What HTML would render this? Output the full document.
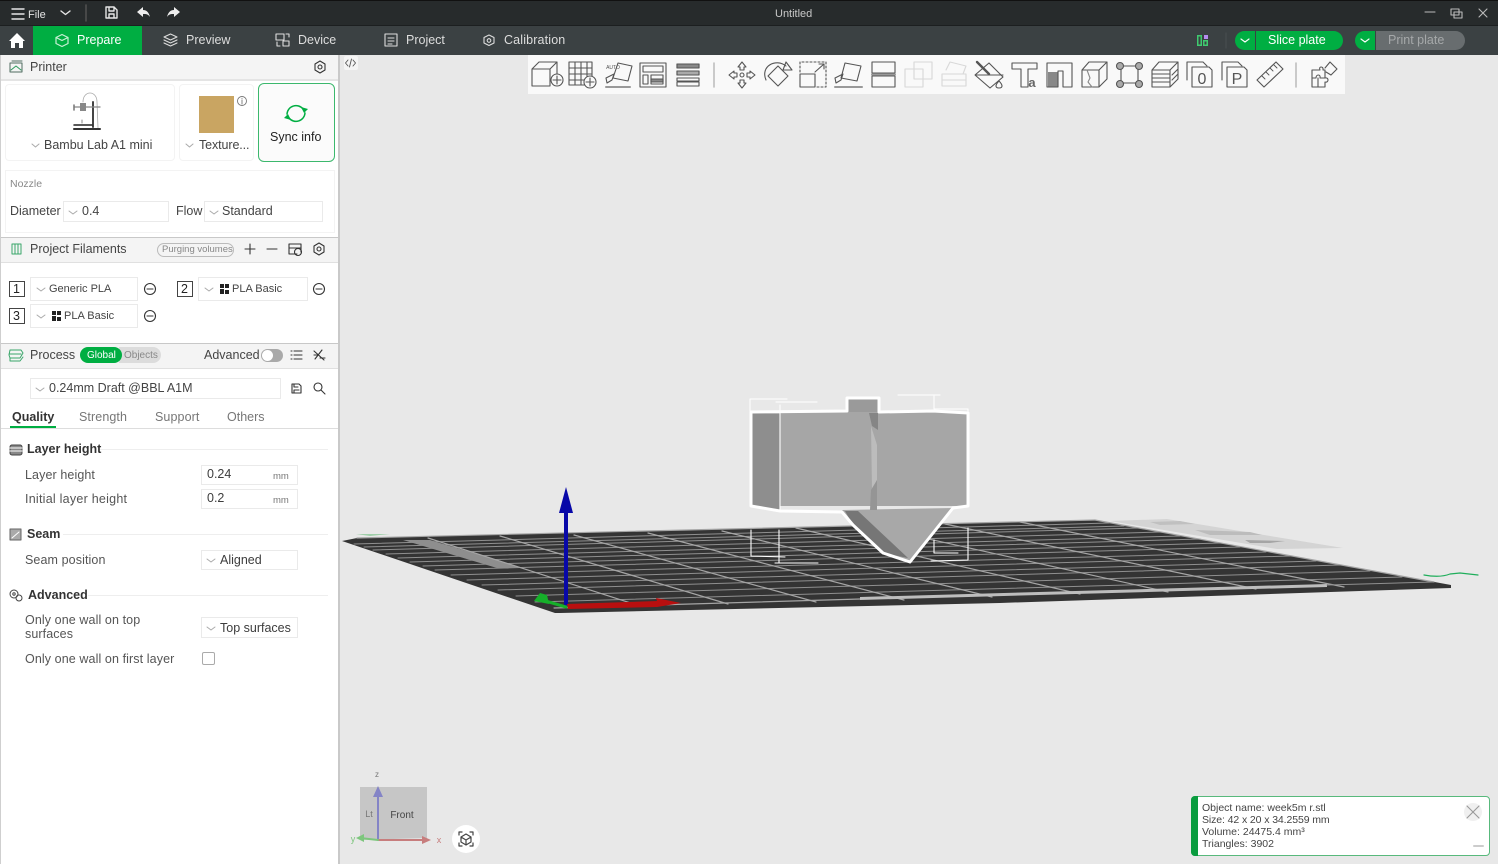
<!DOCTYPE html>
<html><head><meta charset="utf-8"><title>Untitled</title>
<style>
html,body{margin:0;padding:0;width:1498px;height:864px;overflow:hidden;background:#e8e8e8}
body{font-family:"Liberation Sans","Noto Sans CJK SC",sans-serif;position:relative;color:#333}
.a{position:absolute;box-sizing:border-box}
.t{position:absolute;white-space:nowrap;line-height:16px;height:16px;font-size:12.5px;color:#3d3d3d}
.g{color:#555;letter-spacing:.1px}
.b{font-weight:bold;color:#333}
.dd{position:absolute;box-sizing:border-box;border:1px solid #eaeaea;background:#fff}
svg{position:absolute;left:0;top:0}
svg text{font-family:"Liberation Sans",sans-serif}
</style></head><body>
<div class="a" style="left:0;top:0;width:1498px;height:25px;background:#272b2c;border-top:1px solid #111"></div>
<div class="a" style="left:0;top:25px;width:1498px;height:30px;background:#3b4143;border-top:1px solid #1c1f20"></div>
<div class="a" style="left:33px;top:26px;width:109px;height:29px;background:#00ae42"></div>
<div class="a" style="left:0;top:55px;width:340px;height:809px;background:#fff;border-right:2px solid #c9c9c9;border-left:1px solid #cfcfcf"></div>
<div class="a" style="left:1px;top:55px;width:337px;height:26px;background:#f4f4f4;border-bottom:2px solid #e4e4e4"></div>
<div class="a" style="left:1px;top:237px;width:337px;height:26px;background:#f4f4f4;border-top:1px solid #c8c8c8;border-bottom:1px solid #e0e0e0"></div>
<div class="a" style="left:1px;top:343px;width:337px;height:26px;background:#f4f4f4;border-top:1px solid #c8c8c8;border-bottom:1px solid #e0e0e0"></div>
<div class="a" style="left:5px;top:84px;width:170px;height:77px;border:1px solid #f3f3f3;border-radius:4px"></div>
<div class="a" style="left:179px;top:84px;width:75px;height:77px;border:1px solid #f3f3f3;border-radius:4px"></div>
<div class="a" style="left:258px;top:83px;width:77px;height:79px;border:1px solid #3cb86d;border-radius:6px;background:#fbfbfb"></div>
<div class="a" style="left:5px;top:170px;width:330px;height:63px;border:1px solid #f3f3f3"></div>
<div class="a" style="left:199px;top:96px;width:35px;height:37px;background:#c9a562"></div>
<div class="dd" style="left:63px;top:201px;width:106px;height:21px"></div>
<div class="dd" style="left:204px;top:201px;width:119px;height:21px"></div>
<div class="dd" style="left:30px;top:277px;width:108px;height:24px"></div>
<div class="dd" style="left:198px;top:277px;width:110px;height:24px"></div>
<div class="dd" style="left:30px;top:304px;width:108px;height:24px"></div>
<div class="dd" style="left:30px;top:378px;width:251px;height:21px"></div>
<div class="dd" style="left:201px;top:465px;width:97px;height:20px"></div>
<div class="dd" style="left:201px;top:489px;width:97px;height:20px"></div>
<div class="dd" style="left:201px;top:550px;width:97px;height:20px"></div>
<div class="dd" style="left:201px;top:617px;width:97px;height:21px"></div>
<div class="a" style="left:202px;top:652px;width:13px;height:13px;border:1px solid #aaa;border-radius:2px"></div>
<div class="a" style="left:9px;top:281px;width:16px;height:16px;border:1px solid #444"></div>
<div class="a" style="left:177px;top:281px;width:16px;height:16px;border:1px solid #444"></div>
<div class="a" style="left:9px;top:308px;width:16px;height:16px;border:1px solid #444"></div>
<div class="a" style="left:157px;top:243px;width:77px;height:14px;border:1px solid #bbb;border-radius:7px"></div>
<div class="a" style="left:119px;top:347px;width:42px;height:16px;background:#dcdcdc;border-radius:0 8px 8px 0"></div>
<div class="a" style="left:80px;top:347px;width:42px;height:16px;background:#00ae42;border-radius:8px"></div>
<div class="a" style="left:261px;top:349px;width:22px;height:13px;background:#a9a9a9;border-radius:7px"></div>
<div class="a" style="left:262px;top:350px;width:11px;height:11px;background:#fff;border-radius:6px"></div>
<div class="a" style="left:1px;top:428px;width:337px;height:1px;background:#ddd"></div>
<div class="a" style="left:10px;top:426px;width:46px;height:2px;background:#00ae42"></div>
<div class="a" style="left:100px;top:449px;width:228px;height:1px;background:#eee"></div>
<div class="a" style="left:63px;top:534px;width:265px;height:1px;background:#eee"></div>
<div class="a" style="left:88px;top:595px;width:240px;height:1px;background:#eee"></div>
<div class="a" style="left:528px;top:55px;width:817px;height:39px;background:#f9f9f9"></div>
<div class="a" style="left:344px;top:56px;width:14px;height:14px;background:#f5f5f5;border-radius:2px"></div>
<div class="a" style="left:1235px;top:31px;width:20px;height:19px;background:#00ae42;border-radius:10px 0 0 10px"></div>
<div class="a" style="left:1256px;top:31px;width:87px;height:19px;background:#00ae42;border-radius:0 10px 10px 0"></div>
<div class="a" style="left:1355px;top:31px;width:20px;height:19px;background:#00ae42;border-radius:10px 0 0 10px"></div>
<div class="a" style="left:1376px;top:31px;width:89px;height:19px;background:#686d6f;border-radius:0 10px 10px 0"></div>
<div class="a" style="left:1191px;top:796px;width:299px;height:60px;background:#fff;border:1px solid #58b97c;border-radius:4px"></div>
<div class="a" style="left:1191px;top:796px;width:7px;height:60px;background:#0a9c3f;border-radius:4px 0 0 4px"></div>

<svg width="1498" height="864" viewBox="0 0 1498 864" fill="none" stroke-linecap="round" stroke-linejoin="round">
<!-- bed -->
<g stroke="none">
<polygon points="342,541 357,538 1095,520 1451,585 1451,588 1000,603 560,613 555,613" fill="#343434"/>
<polygon points="1110,521 1167,519 1343,548 1277,549" fill="#d4d4d4"/>
<polygon points="1245,540 1285,541 1270,543 1250,543" fill="#a5a5a5"/>
<polygon points="1150,522 1180,521 1195,524 1160,525" fill="#c0c0c0"/>
<polygon points="1195,530 1250,532 1262,535 1210,535" fill="#bcbcbc"/>
<polygon points="403,540 430,540 523,568 497,568" fill="#8e8e8e"/>
<polygon points="356,534 390,534 370,536" fill="#9fcfa9"/>
</g>
<g stroke="#8f8f8f" stroke-width="1">
<path d="M354,544L1109,523M364,547L1124,526M373,550L1138,528M386,554L1160,532M398,558L1180,536M410,562L1200,539M423,566L1220,543M435,570L1240,547M451,575L1266,552M467,580L1290,556M482,585L1316,561M498,590L1340,565M516,596L1370,571M535,602L1402,577"/>
</g>
<g stroke="#a5a5a5" stroke-width="1.2">
<path d="M357,538L1095,520M554,608L860,599"/>
<path d="M428,538L640,606M500,536L728,604M574,535L816,602M648,533L904,600M722,531L992,597M796,528L1080,594M870,526L1168,592M945,524L1256,589M1020,522L1344,587M1095,520L1434,582"/>
</g>
<polygon points="860,597 1327,584 1327,587 860,600" fill="#bdbdbd"/>
<path d="M1327,585L1434,582" stroke="#8f8f8f"/>
<path d="M1424,575Q1440,578 1450,574L1460,573L1478,575" stroke="#1fae5b" stroke-width="1.2"/>
<!-- axes -->
<g stroke="none">
<rect x="564" y="512" width="4" height="95" fill="#0808a8"/>
<polygon points="566,487 559,513 573,513" fill="#0808a8"/>
<polygon points="567,604 657,601 656,598 681,603 657,607 568,609" fill="#b80f0f"/>
</g>
<path d="M566,607L542,600" stroke="#16b02a" stroke-width="3"/>
<polygon points="534,601 540,593 547,595 549,604" fill="#16b02a"/>
<!-- object -->
<g stroke="none">
<polygon points="751,412 968,412 968,506 751,506" fill="#a6a6a6"/>
<polygon points="751,413 780,414 780,511 751,506" fill="#8e8e8e"/>
<polygon points="847,399 879,399 879,412 847,412" fill="#9a9a9a"/>
<polygon points="842,510 953,508 910,562 883,553 853,525" fill="#a8a8a8"/>
<polygon points="845,511 858,511 908,558 883,553 853,525" fill="#767676"/>
<polygon points="869,413 878,413 878,430 872,426" fill="#858585"/>
<polygon points="871,426 877,445 877,480 872,490" fill="#bcbcbc"/>
<polygon points="871,490 877,480 877,510 870,510" fill="#959595"/>
</g>
<path d="M751,412L847,411L847,398L879,398L879,412L933,411L968,413L968,506L953,508L910,562L883,553L853,525L842,512L780,511L751,506Z" stroke="#fff" stroke-width="3"/>
<path d="M750,411V399H787M776,402H817M780,405V511M898,395H940M934,396V409H968V411M751,530V556L785,557M775,563H818M779,530V563M934,540V553H958M968,528V560L931,561" stroke="#fff" stroke-width="1.1"/>
<!-- nav cube -->
<polygon points="360,787 427,787 427,838 360,840" fill="#c6c6c6"/>
<g stroke-width="2">
<path d="M378,840V796" stroke="#8484c6"/><path d="M378,840H425" stroke="#c77d7d"/><path d="M378,840L360,838" stroke="#7dc67d"/>
</g>
<polygon points="378,786 373,797 383,797" fill="#8484c6"/><polygon points="431,840 422,836 422,844" fill="#c77d7d"/><polygon points="356,838 364,834 364,842" fill="#7dc67d"/>
<text x="402" y="818" font-size="10" fill="#444" text-anchor="middle">Front</text>
<text x="369" y="817" font-size="9" fill="#777" text-anchor="middle">Lt</text>
<text x="377" y="777" font-size="8" fill="#777" text-anchor="middle">z</text>
<text x="439" y="843" font-size="9" fill="#c77d7d" text-anchor="middle">x</text>
<text x="353" y="842" font-size="9" fill="#7dc67d" text-anchor="middle">y</text>
<circle cx="466" cy="839" r="14" fill="#fff"/>
<g stroke="#444" stroke-width="1.2"><path d="M459,835V832H462M470,832H473V835M473,843V846H470M462,846H459V843"/><path d="M466,834L471,837V842L466,845L461,842V837ZM461,837L466,840L471,837M466,840V845"/></g>

<!-- top bar -->
<g stroke="#e6e6e6" stroke-width="1.4">
<path d="M12,9H24M12,14H24M12,19H24"/>
<path d="M61,11L65.500,14.500L70,11"/>
<path d="M86,5V21" stroke="#555"/>
<path d="M106,7H114L117,10V18H106ZM109,7V11H114V7M109,18V14H114V18"/>
</g>
<path d="M137,12L143,7V10C147,10 149,13 150,17C148,14 146,14 143,14V17Z" fill="#eee"/>
<path d="M180,12L174,7V10C170,10 168,13 167,17C169,14 171,14 174,14V17Z" fill="#eee"/>
<g stroke="#bbb" stroke-width="1.1"><path d="M1425,12H1435"/><path d="M1451,9H1459V15H1451ZM1454,12H1462V18H1454Z"/><path d="M1479,9L1487,17M1487,9L1479,17"/></g>
<!-- tab icons -->
<path d="M9,41L17,33L25,41H23V48H19V43H15V48H11V41Z" fill="#fff"/>
<g stroke="#c8f0d4" stroke-width="1.2"><path d="M62,34.500L68,37.500V43.500L62,46.500L56,43.500V37.500ZM56,37.500L62,40.500L68,37.500"/></g>
<g stroke="#ddd" stroke-width="1.1">
<path d="M170.500,34L177,37L170.500,40L164,37ZM164,40L170.500,43L177,40M164,43L170.500,46L177,43"/>
<path d="M276,34H284V40H276ZM277,46V42M277,46H280M286,34H289V37M289,46H283V41H289Z"/>
<path d="M385,34H397V46H385ZM388,38H394M388,41H394M388,44H392"/>
<path d="M489,35L494,37.500V43L489,45.500L484,43V37.500Z"/><circle cx="489" cy="40.500" r="1.800"/>
</g>
<g stroke="#fff" stroke-width="1.1">
<path d="M1241,39L1245,42L1249,39M1361,39L1365,42L1369,39"/>
</g>
<g fill="#3fca6f" stroke="none"><rect x="1197" y="35" width="5" height="11"/><rect x="1203" y="40" width="5" height="6"/></g>
<rect x="1198.500" y="36.500" width="2" height="8" fill="#3b4143"/><rect x="1204.500" y="41.500" width="2" height="3" fill="#3b4143"/>
<rect x="1204" y="35" width="4" height="4" fill="#b58cf0"/>
<path d="M1226,33V48" stroke="#4a5052"/>
<!-- left panel icons -->
<g stroke="#4f6b60" stroke-width="1">
<path d="M10,63H22V72H10ZM12,61H22"/><path d="M11,70L16,66L21,70" stroke="#2d9a5c"/>
<path d="M12,244H21V254H12ZM15,244V254M18,244V254" stroke="#3aa66a"/>
<path d="M10,350H21L23,353L20,358H10L9,355ZM9,354H21M10,358V361H20L23,357" stroke="#3aa66a"/>
</g>
<g stroke="#333" stroke-width="1.1">
<circle cx="320" cy="67" r="2"/><path d="M320,61L325,64V70L320,73L315,70V64Z"/>
<circle cx="319" cy="249" r="2"/><path d="M319,243L324,246V252L319,255L314,252V246Z"/>
<path d="M245,249H255M250,244V254M267,249H277" />
<path d="M289,244H301V252M289,244V254H297M289,248H301"/><circle cx="298" cy="252" r="3.500"/>
<circle cx="150" cy="289" r="5.500"/><path d="M147,289H153"/>
<circle cx="319" cy="289" r="5.500"/><path d="M316,289H322"/>
<circle cx="150" cy="316" r="5.500"/><path d="M147,316H153"/>
<path d="M294,351H302M294,355H302M294,359H302M291,351H292M291,355H292M291,359H292"/>
<path d="M314,351L324,360M322,350L315,359M314,355H318M320,358H325"/>
<path d="M292,384H299L301,386V393H292ZM294,384V387H298M294,393V390H299"/>
<circle cx="318" cy="387" r="4"/><path d="M321,390L325,394"/>
</g>
<g stroke="#aaa" stroke-width="1">
<path d="M32,144L35.500,147L39,144M186,144L189.500,147L193,144M69,211L73,214L77,211M210,211L214,214L218,211M37,288L41,291L45,288M205,288L209,291L213,288M37,315L41,318L45,315M36,388L40,391L44,388M207,559L211,562L215,559M207,627L211,630L215,627"/>
</g>
<g fill="#222" stroke="none"><path d="M220,284H224V288H220ZM225,284H229V288H225ZM220,289H224V294H220ZM225,290H229V294H225Z"/><path d="M52,311H56V315H52ZM57,311H61V315H57ZM52,316H56V321H52ZM57,317H61V321H57Z"/></g>
<circle cx="242" cy="101" r="4.500" stroke="#777" stroke-width="0.9"/><path d="M242,100V104M242,98.500V98.700" stroke="#777" stroke-width="0.9"/>
<!-- sync -->
<g stroke="#00ae42" stroke-width="1.5"><path d="M287,114A9,9 0 0 1 303,109M305,113A9,9 0 0 1 289,118"/></g>
<polygon points="301,107 308,109 304,113" fill="#00ae42"/><polygon points="291,120 284,118 288,114" fill="#00ae42"/>
<!-- printer -->
<g stroke="#666"><path d="M83,102C83,90 97,90 97,102L98,128" stroke="#aaa" stroke-width="0.8"/><path d="M93,102V127" stroke="#444" stroke-width="2"/><path d="M74,107H100" stroke="#888" stroke-width="1.3"/><path d="M74,105V110" stroke="#777" stroke-width="1.5"/><path d="M74,125H92" stroke="#222" stroke-width="1.5"/><path d="M74,129H100" stroke="#333" stroke-width="2"/><path d="M82,120V123" stroke="#888"/></g>
<rect x="80" y="103" width="6" height="8" fill="#888"/>
<!-- section icons -->
<g stroke="#444" stroke-width="1">
<rect x="10" y="445" width="12" height="10" rx="2" fill="#888"/><path d="M10,448H22M10,451H22" stroke="#fff"/>
<rect x="10" y="529" width="11" height="11" fill="#aaa" stroke="#666"/><path d="M12,538L19,532" stroke="#fff"/>
<circle cx="14" cy="594" r="4"/><circle cx="19" cy="598" r="3"/><circle cx="14" cy="594" r="1.200"/>
</g>
<!-- collapse -->
<path d="M348,60L345.500,63L348,66M353,60L355.500,63L353,66M351.500,59L349.500,67" stroke="#555" stroke-width="0.9"/>
<!-- notification close -->
<circle cx="1473" cy="812" r="9" fill="#f0f0f0"/><path d="M1467,806L1479,818M1479,806L1467,818" stroke="#999" stroke-width="1.1"/>
<path d="M1474,846H1483" stroke="#ccc" stroke-width="2"/>

<!-- toolbar icons -->
<g stroke="#555" stroke-width="1.1">
<path d="M532,69H550V86H532ZM532,69L539,62H557V76M550,69L557,62"/><circle cx="557" cy="80" r="6" fill="#f9f9f9"/><path d="M553,80H561M557,76V84"/>
<path d="M569,62H592V85H569ZM569,68H592M569,74H592M569,80H592M575,62V85M581,62V85M587,62V85"/><circle cx="590" cy="82" r="6" fill="#f9f9f9"/><path d="M586,82H594M590,78V86"/>
<path d="M618,63L632,66L628,81L613,78Z"/><path d="M606,87H630" stroke-width="2" stroke="#999"/><path d="M614,74L606,78L607,83L612,80Z"/>
<path d="M640,63H666V87H640ZM643,66H663V72H643ZM643,75H648V84H643ZM651,75H663V84H651Z"/><rect x="651" y="79" width="12" height="3" fill="#888"/>
<path d="M677,64H699V68H677ZM677,71H699V75H677ZM677,78H699V81H677ZM677,82H699V86H677Z"/><rect x="677" y="64" width="22" height="4" fill="#888"/><rect x="677" y="71" width="22" height="4" fill="#aaa"/>
<path d="M714,63V87" stroke="#bbb" stroke-width="1.5"/>
<circle cx="742" cy="75" r="2"/><path d="M738,67L742,62L746,67H744V70H740V67ZM738,83L742,88L746,83H744V80H740V83ZM734,71L729,75L734,79V77H737V73H734ZM750,71L755,75L750,79V77H747V73H750Z"/>
<path d="M778,66L788,76L778,86L768,76Z"/><path d="M766,80C760,66 776,58 786,66"/><path d="M786,62L792,70L783,70Z"/>
<path d="M800,74H815V87H800Z"/><path d="M800,72V62H826V87H817" stroke-dasharray="2 2"/><path d="M815,72L824,64M819,64H824V69"/>
<path d="M845,63L861,66L857,81L841,78Z"/><path d="M835,87H862" stroke-width="2" stroke="#999"/><path d="M843,74L835,78L836,83L841,80Z"/>
<path d="M872,62H895V73H872ZM872,76H895V87H872Z"/><path d="M872,74.500H895" stroke="#999" stroke-width="2"/>
<g stroke="#d8d8d8"><path d="M914,62H932V79H914ZM905,69H923V87H905Z"/><path d="M942,74H966V86H942ZM946,70L950,62L966,66L963,74"/><path d="M942,80H966"/></g>
<path d="M989,63L1003,77L990,88L975,75ZM975,75H1003"/><path d="M977,62L989,74" stroke-width="2.400"/><path d="M999,81C1003,85 1003,88 999,88C995,88 995,85 999,81Z"/>
<path d="M1012,63H1037V69H1028V87H1021V69H1012Z"/>
<rect x="1048" y="72" width="10" height="15" fill="#888" stroke="none"/>
<path d="M1047,63H1072V87H1063V71H1058V87H1047Z"/>
<path d="M1082,70H1099V87H1082ZM1082,70L1089,62H1107V79L1099,87M1099,70L1107,62"/><path d="M1087,70L1090,78L1088,82L1092,87" stroke="#888"/>
<path d="M1121,66H1138V83H1121Z"/><circle cx="1120" cy="66" r="3.500" fill="#aaa"/><circle cx="1139" cy="66" r="3.500" fill="#aaa"/><circle cx="1120" cy="84" r="3.500" fill="#aaa"/><circle cx="1139" cy="84" r="3.500" fill="#aaa"/>
<path d="M1152,70H1170V87H1152ZM1152,70L1159,62H1178V79L1170,87M1170,70L1178,62M1152,74H1170M1152,78H1170M1152,82H1170M1172,75L1178,69M1172,80L1178,74M1172,85L1178,79"/>
<path d="M1187,80V62H1203L1207,66M1192,87V67H1209L1212,70V87Z"/>
<path d="M1222,80V62H1238L1242,66M1227,87V67H1244L1247,70V87Z"/>
<path d="M1257,80L1276,62L1283,69L1264,87Z"/><path d="M1262,76L1265,79M1266,72L1269,75M1270,68L1273,71M1274,65L1277,68" stroke-width="0.9"/>
<path d="M1296,63V87" stroke="#bbb" stroke-width="1.5"/>
<path d="M1312,70H1320C1318,66 1324,66 1323,70H1325V78C1329,77 1329,83 1325,82V87H1312ZM1312,78H1316C1316,74 1321,74 1320,78H1325M1318,78V87"/><path d="M1325,68L1330,62L1337,69L1331,75L1326,72"/>
</g>
<text x="1032" y="87" font-size="13" font-weight="bold" fill="#666" text-anchor="middle">a</text>
<text x="1202" y="84" font-size="16" fill="#555" text-anchor="middle">0</text>
<text x="1237" y="84" font-size="16" fill="#555" text-anchor="middle">P</text>
<text x="613" y="69" font-size="5" fill="#555" text-anchor="middle">AUTO</text>
</svg>

<div class="t" style="left:28px;top:7px;font-size:11px;color:#e4e4e4">File</div>
<div class="t" style="left:775px;top:6px;font-size:11px;color:#c9c9c9">Untitled</div>
<div class="t" style="left:77px;top:32px;color:#fff">Prepare</div>
<div class="t" style="left:186px;top:32px;color:#ddd">Preview</div>
<div class="t" style="left:298px;top:32px;color:#ddd">Device</div>
<div class="t" style="left:406px;top:32px;color:#ddd">Project</div>
<div class="t" style="left:504px;top:32px;color:#ddd;letter-spacing:.15px">Calibration</div>
<div class="t" style="left:1268px;top:32px;color:#fff">Slice plate</div>
<div class="t" style="left:1388px;top:32px;color:#a5a8a9">Print plate</div>
<div class="t" style="left:30px;top:59px;color:#444">Printer</div>
<div class="t" style="left:44px;top:137px;color:#444">Bambu Lab A1 mini</div>
<div class="t" style="left:199px;top:137px;color:#444;letter-spacing:-.1px">Texture...</div>
<div class="t" style="left:270px;top:129px;color:#222">Sync info</div>
<div class="t" style="left:10px;top:176px;font-size:10.5px;color:#888">Nozzle</div>
<div class="t" style="left:10px;top:203px;color:#444">Diameter</div>
<div class="t" style="left:82px;top:203px;color:#444">0.4</div>
<div class="t" style="left:176px;top:203px;color:#444">Flow</div>
<div class="t" style="left:222px;top:203px;color:#444">Standard</div>
<div class="t" style="left:30px;top:241px;color:#444">Project Filaments</div>
<div class="t" style="left:162px;top:242px;font-size:9.5px;color:#888">Purging volumes</div>
<div class="t" style="left:13px;top:281px;color:#222">1</div>
<div class="t" style="left:181px;top:281px;color:#222">2</div>
<div class="t" style="left:13px;top:308px;color:#222">3</div>
<div class="t" style="left:49px;top:281px;font-size:11px;color:#444">Generic PLA</div>
<div class="t" style="left:232px;top:281px;font-size:11px;color:#444">PLA Basic</div>
<div class="t" style="left:64px;top:308px;font-size:11px;color:#444">PLA Basic</div>
<div class="t" style="left:30px;top:347px;color:#444">Process</div>
<div class="t" style="left:87px;top:348px;font-size:10px;color:#fff">Global</div>
<div class="t" style="left:124px;top:348px;font-size:10px;color:#888">Objects</div>
<div class="t" style="left:204px;top:347px;color:#444">Advanced</div>
<div class="t" style="left:49px;top:380px;color:#444">0.24mm Draft @BBL A1M</div>
<div class="t b" style="left:12px;top:409px">Quality</div>
<div class="t" style="left:79px;top:409px;color:#777;letter-spacing:.1px">Strength</div>
<div class="t" style="left:155px;top:409px;color:#777;letter-spacing:.1px">Support</div>
<div class="t" style="left:227px;top:409px;color:#777">Others</div>
<div class="t b" style="left:27px;top:441px">Layer height</div>
<div class="t g" style="left:25px;top:467px">Layer height</div>
<div class="t" style="left:207px;top:466px">0.24</div>
<div class="t" style="left:273px;top:469px;font-size:9.5px;color:#777">mm</div>
<div class="t g" style="left:25px;top:491px;letter-spacing:.25px">Initial layer height</div>
<div class="t" style="left:207px;top:490px">0.2</div>
<div class="t" style="left:273px;top:493px;font-size:9.5px;color:#777">mm</div>
<div class="t b" style="left:27px;top:526px">Seam</div>
<div class="t g" style="left:25px;top:552px">Seam position</div>
<div class="t" style="left:220px;top:552px">Aligned</div>
<div class="t b" style="left:28px;top:587px">Advanced</div>
<div class="t g" style="left:25px;top:612px">Only one wall on top</div>
<div class="t g" style="left:25px;top:626px">surfaces</div>
<div class="t" style="left:220px;top:620px">Top surfaces</div>
<div class="t g" style="left:25px;top:651px">Only one wall on first layer</div>
<div class="t" style="left:1202px;top:800px;font-size:10.5px;color:#444">Object name: week5m r.stl</div>
<div class="t" style="left:1202px;top:812px;font-size:10.5px;color:#444;letter-spacing:-.1px">Size: 42 x 20 x 34.2559 mm</div>
<div class="t" style="left:1202px;top:824px;font-size:10.5px;color:#444">Volume: 24475.4 mm³</div>
<div class="t" style="left:1202px;top:836px;font-size:10.5px;color:#444">Triangles: 3902</div>
</body></html>
